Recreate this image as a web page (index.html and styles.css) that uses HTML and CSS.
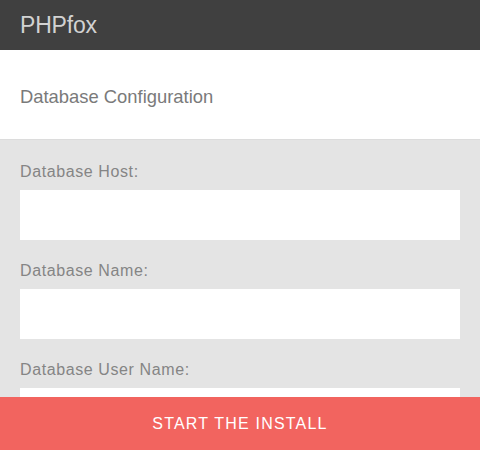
FILE: index.html
```html
<!DOCTYPE html>
<html>
<head>
<meta charset="utf-8">
<link rel="stylesheet" href="styles.css">
</head>
<body>
<header class="topbar"><span class="brand">PHPfox</span></header>
<section class="step-title">Database Configuration</section>
<main class="form">
  <label class="field">
    <span class="field-label">Database Host:</span>
    <input class="field-input" type="text">
  </label>
  <label class="field">
    <span class="field-label">Database Name:</span>
    <input class="field-input" type="text">
  </label>
  <label class="field">
    <span class="field-label">Database User Name:</span>
    <input class="field-input" type="text">
  </label>
</main>
<button class="install-btn">START THE INSTALL</button>
</body>
</html>
```
FILE: styles.css
```css
html, body {
  margin: 0;
  padding: 0;
  height: 100%;
  overflow: hidden;
  background: #e4e4e4;
  font-family: "Liberation Sans", Arial, sans-serif;
}
.topbar {
  height: 50px;
  background: #404040;
  display: flex;
  align-items: center;
  padding: 0 20px;
}
.brand {
  color: #d2d2d2;
  font-size: 23px;
  letter-spacing: -0.2px;
}
.step-title {
  height: 90px;
  background: #fff;
  border-bottom: 1px solid #dcdcdc;
  box-sizing: border-box;
  display: flex;
  align-items: center;
  padding: 0 20px;
  color: #7a7a7a;
  font-size: 18.4px;
  padding-top: 4px;
}
.form {
  padding: 23px 20px 0;
  display: flex;
  flex-direction: column;
  gap: 22px;
}
.field {
  display: flex;
  flex-direction: column;
  gap: 9px;
}
.field-label {
  color: #858585;
  font-size: 16px;
  letter-spacing: 0.6px;
  line-height: 18px;
}
.field-input {
  height: 50px;
  border: 0;
  background: #fff;
  margin: 0;
  padding: 0 10px;
  box-sizing: border-box;
  width: 100%;
}
.install-btn {
  position: fixed;
  left: 0;
  right: 0;
  bottom: 0;
  height: 53px;
  border: 0;
  background: #f2645f;
  color: #fff;
  font-family: "Liberation Sans", Arial, sans-serif;
  font-size: 16px;
  letter-spacing: 1.2px;
  padding: 0;
}
```
